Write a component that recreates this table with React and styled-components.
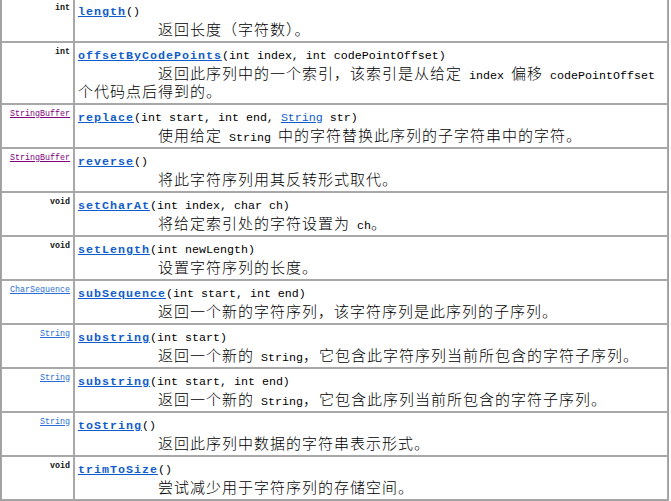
import React from "react";
import styled, { createGlobalStyle } from "styled-components";

const GlobalStyle = createGlobalStyle`
  html, body {
    margin: 0;
    padding: 0;
    background: #ffffff;
  }
  body {
    font-family: "Noto Sans CJK SC", sans-serif;
    overflow: hidden;
  }
`;

const Table = styled.div`
  display: grid;
  grid-template-columns: 73px 1fr;
  width: 669px;
  box-sizing: border-box;
  border: 1px solid #a0a0a0;
  margin-top: -3px;
`;

const TypeCell = styled.div`
  border: 1px solid #a8a8a8;
  padding: 4px 3px 3px;
  text-align: right;
  font-family: "Liberation Mono", monospace;
  font-size: 8.33px;
  font-weight: bold;
  line-height: 10px;
  color: #111;
`;

const TypeLink = styled.a`
  color: ${(p) => (p.$visited ? "#800080" : "#2b6fd6")};
  font-weight: normal;
  text-decoration: underline;
  cursor: pointer;
`;

const MemberCell = styled.div`
  border: 1px solid #a8a8a8;
  padding: 5px 3px 3px;
  min-width: 0;
`;

const Signature = styled.div`
  font-family: "Liberation Mono", monospace;
  font-size: 11.67px;
  line-height: 16px;
  height: 16px;
  color: #000;
  white-space: nowrap;
`;

const MethodName = styled.a`
  font-weight: bold;
  letter-spacing: 1px;
  color: #0f5ccc;
  text-decoration: underline;
  cursor: pointer;
`;

const ParamLink = styled.a`
  color: #0f5ccc;
  text-decoration: underline;
  cursor: pointer;
`;

const Desc = styled.div`
  font-family: "Noto Sans CJK SC", sans-serif;
  font-size: 15px;
  font-weight: 300;
  letter-spacing: 1px;
  line-height: 18px;
  text-indent: 80px;
  color: #000;
`;

const Code = styled.code`
  font-family: "Liberation Mono", monospace;
  font-size: 11.67px;
  font-weight: normal;
  line-height: 8px;
  letter-spacing: 0;
`;

const rows = [
  {
    type: "int",
    name: "length",
    params: ["()"],
    desc: ["返回长度（字符数）。"],
  },
  {
    type: "int",
    name: "offsetByCodePoints",
    params: ["(int index, int codePointOffset)"],
    desc: [
      "返回此序列中的一个索引，该索引是从给定",
      { code: " index " },
      "偏移",
      { code: " codePointOffset " },
      "个代码点后得到的。",
    ],
  },
  {
    type: "StringBuffer",
    typeLink: true,
    visited: true,
    name: "replace",
    params: ["(int start, int end, ", { link: "String" }, " str)"],
    desc: ["使用给定", { code: " String " }, "中的字符替换此序列的子字符串中的字符。"],
  },
  {
    type: "StringBuffer",
    typeLink: true,
    visited: true,
    name: "reverse",
    params: ["()"],
    desc: ["将此字符序列用其反转形式取代。"],
  },
  {
    type: "void",
    name: "setCharAt",
    params: ["(int index, char ch)"],
    desc: ["将给定索引处的字符设置为", { code: " ch" }, "。"],
  },
  {
    type: "void",
    name: "setLength",
    params: ["(int newLength)"],
    desc: ["设置字符序列的长度。"],
  },
  {
    type: "CharSequence",
    typeLink: true,
    name: "subSequence",
    params: ["(int start, int end)"],
    desc: ["返回一个新的字符序列，该字符序列是此序列的子序列。"],
  },
  {
    type: "String",
    typeLink: true,
    name: "substring",
    params: ["(int start)"],
    desc: ["返回一个新的", { code: " String" }, "，它包含此字符序列当前所包含的字符子序列。"],
  },
  {
    type: "String",
    typeLink: true,
    name: "substring",
    params: ["(int start, int end)"],
    desc: ["返回一个新的", { code: " String" }, "，它包含此序列当前所包含的字符子序列。"],
  },
  {
    type: "String",
    typeLink: true,
    name: "toString",
    params: ["()"],
    desc: ["返回此序列中数据的字符串表示形式。"],
  },
  {
    type: "void",
    name: "trimToSize",
    params: ["()"],
    desc: ["尝试减少用于字符序列的存储空间。"],
  },
];

function renderParts(parts) {
  return parts.map((p, i) => {
    if (typeof p === "string") return <React.Fragment key={i}>{p}</React.Fragment>;
    if (p.link) return <ParamLink key={i}>{p.link}</ParamLink>;
    if (p.code) return <Code key={i}>{p.code}</Code>;
    return null;
  });
}

export default function App() {
  return (
    <>
      <GlobalStyle />
      <Table>
        {rows.map((r, i) => (
          <React.Fragment key={i}>
            <TypeCell>
              {r.typeLink ? (
                <TypeLink $visited={r.visited}>{r.type}</TypeLink>
              ) : (
                r.type
              )}
            </TypeCell>
            <MemberCell>
              <Signature>
                <MethodName>{r.name}</MethodName>
                {renderParts(r.params)}
              </Signature>
              <Desc>{renderParts(r.desc)}</Desc>
            </MemberCell>
          </React.Fragment>
        ))}
      </Table>
    </>
  );
}
